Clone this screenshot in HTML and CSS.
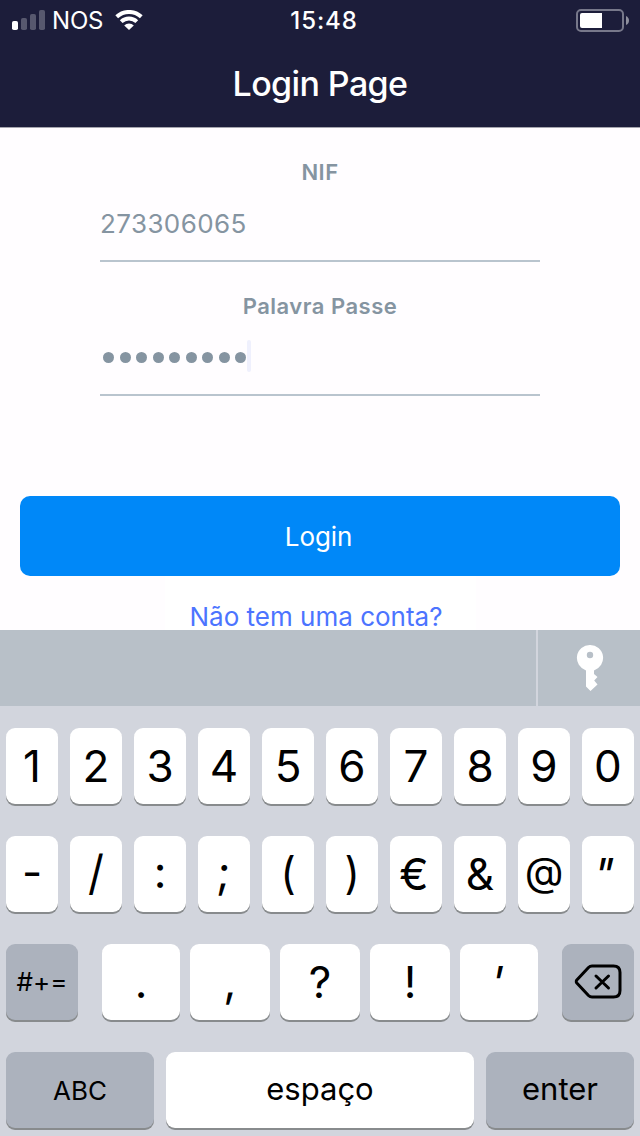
FILE: index.html
```html
<!DOCTYPE html>
<html lang="pt">
<head>
<meta charset="utf-8">
<title>Login Page</title>
<link rel="stylesheet" href="styles.css">
</head>
<body>
<div class="screen">
  <header class="header">
    <div class="status">
      <div class="status-left">
        <svg class="signal" width="34" height="20" viewBox="0 0 34 20">
          <rect x="0" y="11" width="6" height="9" rx="1.8" fill="#fff"/>
          <rect x="9" y="8" width="6" height="12" rx="1.8" fill="#57586e"/>
          <rect x="18" y="4" width="6" height="16" rx="1.8" fill="#57586e"/>
          <rect x="27" y="0" width="6" height="20" rx="1.8" fill="#57586e"/>
        </svg>
        <span class="carrier">NOS</span>
        <svg class="wifi" width="28" height="20" viewBox="0 0 28 20">
          <path d="M1.700 6.800A18 18 0 0 1 26.300 6.800" fill="none" stroke="#fff" stroke-width="4"/>
          <path d="M6.200 11.600A11.500 11.500 0 0 1 21.800 11.600" fill="none" stroke="#fff" stroke-width="4"/>
          <path d="M14 20L9.200 15.500A6.600 6.600 0 0 1 18.800 15.500Z" fill="#fff"/>
        </svg>
      </div>
      <time class="clock">15:48</time>
      <svg class="battery" width="54" height="24" viewBox="0 0 54 24">
        <rect x="1" y="1" width="46" height="21" rx="4" fill="none" stroke="#77788a" stroke-width="2"/>
        <path d="M6 4H26V19H6Q4 19 4 17V6Q4 4 6 4Z" fill="#fff"/>
        <path d="M50 7Q53 8.500 53 11.500T50 16Z" fill="#8e8f9d"/>
      </svg>
    </div>
    <h1 class="title">Login Page</h1>
  </header>

  <main class="form">
    <label class="label nif">NIF</label>
    <div class="field number">273306065</div>
    <label class="label pass">Palavra Passe</label>
    <div class="field password">
      <i class="dot"></i><i class="dot"></i><i class="dot"></i><i class="dot"></i><i class="dot"></i><i class="dot"></i><i class="dot"></i><i class="dot"></i><i class="dot"></i><i class="caret"></i>
    </div>
    <button class="login"><span>Login</span></button>
    <a class="signup">Não tem uma conta?</a>
  </main>

  <section class="keyboard">
    <div class="suggestions">
      <div class="key-access">
        <svg width="28" height="48" viewBox="0 0 28 48">
          <path fill-rule="evenodd" fill="#fff" d="M14 0A13 13 0 0 1 18 25.400V29L21.500 32L18.200 35.500L21.500 39.500L14.500 46L10 41.500V25.400A13 13 0 0 1 14 0ZM14 6.800a3.200 3.200 0 1 0 0 6.400a3.200 3.200 0 1 0 0-6.400Z"/>
        </svg>
      </div>
    </div>
    <div class="rows">
      <div class="row ten">
        <div class="key">1</div><div class="key">2</div><div class="key">3</div><div class="key">4</div><div class="key">5</div><div class="key">6</div><div class="key">7</div><div class="key">8</div><div class="key">9</div><div class="key">0</div>
      </div>
      <div class="row ten">
        <div class="key"><span class="hyphen">-</span></div><div class="key"><span class="slash">/</span></div><div class="key"><span class="colon">:</span></div><div class="key"><span class="colon semi">;</span></div><div class="key"><span class="paren">(</span></div><div class="key"><span class="paren">)</span></div><div class="key"><span class="euro">€</span></div><div class="key">&amp;</div><div class="key"><span class="at">@</span></div><div class="key"><span class="slant quote">"</span></div>
      </div>
      <div class="row punctuation">
        <div class="key dark small">#+=</div>
        <div class="key">.</div><div class="key"><span class="comma">,</span></div><div class="key">?</div><div class="key">!</div><div class="key"><span class="slant">'</span></div>
        <div class="key dark">
          <svg class="delete" width="48" height="36" viewBox="0 0 48 36" fill="none" stroke="#000" stroke-linecap="round" stroke-linejoin="round">
            <path stroke-width="3" d="M17.500 2H39Q45.500 2 45.500 8.500V26.500Q45.500 33 39 33H17.500Q15.500 33 14 31.500L2.300 19Q1 17.500 2.300 16L14 3.500Q15.500 2 17.500 2Z"/>
            <path stroke-width="3" d="M21.500 12L34 24M34 12L21.500 24"/>
          </svg>
        </div>
      </div>
      <div class="row bottom">
        <div class="key dark small abc">ABC</div>
        <div class="key word">espaço</div>
        <div class="key dark word">enter</div>
      </div>
    </div>
  </section>
</div>
</body>
</html>
```
FILE: styles.css
```css
* { box-sizing: border-box; }
body { margin: 0; font-family: Inter, "Liberation Sans", sans-serif; }
.screen { width: 640px; height: 1136px; display: flex; flex-direction: column; overflow: hidden; background: #fffdff; }

.header { flex: none; height: 128px; background: #1c1d3a; border-bottom: 1px solid #a5a5ae; color: #fff; }
.status { display: grid; grid-template-columns: 1fr auto 1fr; align-items: center; height: 41px; padding: 0 10px 0 12px; }
.status-left { display: flex; align-items: center; }
.carrier { margin-left: 6px; font-size: 24px; line-height: 42px; letter-spacing: -0.2px; }
.wifi { margin-left: 12px; }
.signal, .wifi { margin-bottom: 2px; }
.clock { font-size: 24px; font-weight: 500; letter-spacing: 0.9px; padding-left: 6px; line-height: 42px; }
.battery { justify-self: end; }
.title { margin: 0; font-size: 34px; font-weight: 500; line-height: 85px; letter-spacing: -0.6px; text-align: center; }

.form { flex: none; height: 502px; padding: 29px 20px 0; display: flex; flex-direction: column; align-items: center; }
.label { flex: none; height: 30px; line-height: 30px; font-size: 22px; font-weight: 600; color: #8594a1; letter-spacing: 0.5px; }
.field { flex: none; width: 440px; height: 75px; border-bottom: 2px solid #b9c4ce; color: #8594a1; font-size: 26px; line-height: 74px; letter-spacing: 0.4px; }
.pass { margin-top: 29px; }
.password { display: flex; align-items: center; gap: 5.500px; padding-left: 3px; }
.dot { width: 11px; height: 11px; border-radius: 50%; background: #8594a1; }
.caret { width: 4px; height: 32px; margin: -4px 0 0 -4.500px; border-radius: 2px; background: #eff0fd; }
.login { flex: none; width: 600px; height: 80px; margin-top: 100px; padding: 0 3px 0 0; border: 0; border-radius: 10px; background: #0088f8; color: #fff; font: 400 26px/80px Inter, sans-serif; letter-spacing: -0.1px; }
.login span { position: relative; top: 1px; }
.signup { flex: none; width: 311px; height: 54px; padding: 28px 8px 0 0; line-height: 26px; background: #fff; color: #4c74ff; font-size: 26px; text-align: center; white-space: nowrap; }

.keyboard { flex: 1; background: #d2d5dd; color: #000; }
.suggestions { height: 76px; background: #b8c0c8; display: flex; justify-content: flex-end; }
.key-access { width: 104px; border-left: 2px solid #d2d5dd; display: flex; align-items: center; justify-content: center; padding: 2px 0 0 2px; }
.rows { padding: 22px 6px 0; display: flex; flex-direction: column; gap: 32px; }
.row { display: grid; height: 76px; }
.ten { grid-template-columns: repeat(10, 52px); gap: 12px; }
.punctuation { grid-template-columns: 86px 78px 80px 80px 80px 78px 86px; column-gap: 10px; }
.punctuation .key:first-child { width: 72px; }
.punctuation .key:last-child { width: 72px; justify-self: end; }
.bottom { grid-template-columns: 148px 308px 148px; gap: 12px; }
.key { height: 76px; border-radius: 9px; background: #fff; box-shadow: 0 2px 0 #888b8d; display: flex; align-items: center; justify-content: center; font-size: 44px; line-height: 76px; }
.dark { background: #acb2bd; }
.small { font-size: 26px; }
.abc { padding-top: 2px; }
.word { font-size: 31px; padding-bottom: 2px; }
.key span { display: inline-block; }
.hyphen { transform: translateY(-2px); }
.slash { transform: translateY(-1px) scaleY(1.08); }
.colon { transform: translateY(-2px); }
.semi { transform: translateY(-2px) skewX(-3deg); }
.paren { transform: translateY(-1px) scaleX(0.95); }
.euro { transform: translateX(-2px); }
.at { font-size: 40px; transform: translateY(-2px); }
.comma { transform: translateY(-1px) skewX(-2deg); }
.slant { transform: translateX(-1px) skewX(-12deg); }
.quote { transform: translateX(-4px) skewX(-12deg); }
.delete { transform: translateX(0.500px); }
```
